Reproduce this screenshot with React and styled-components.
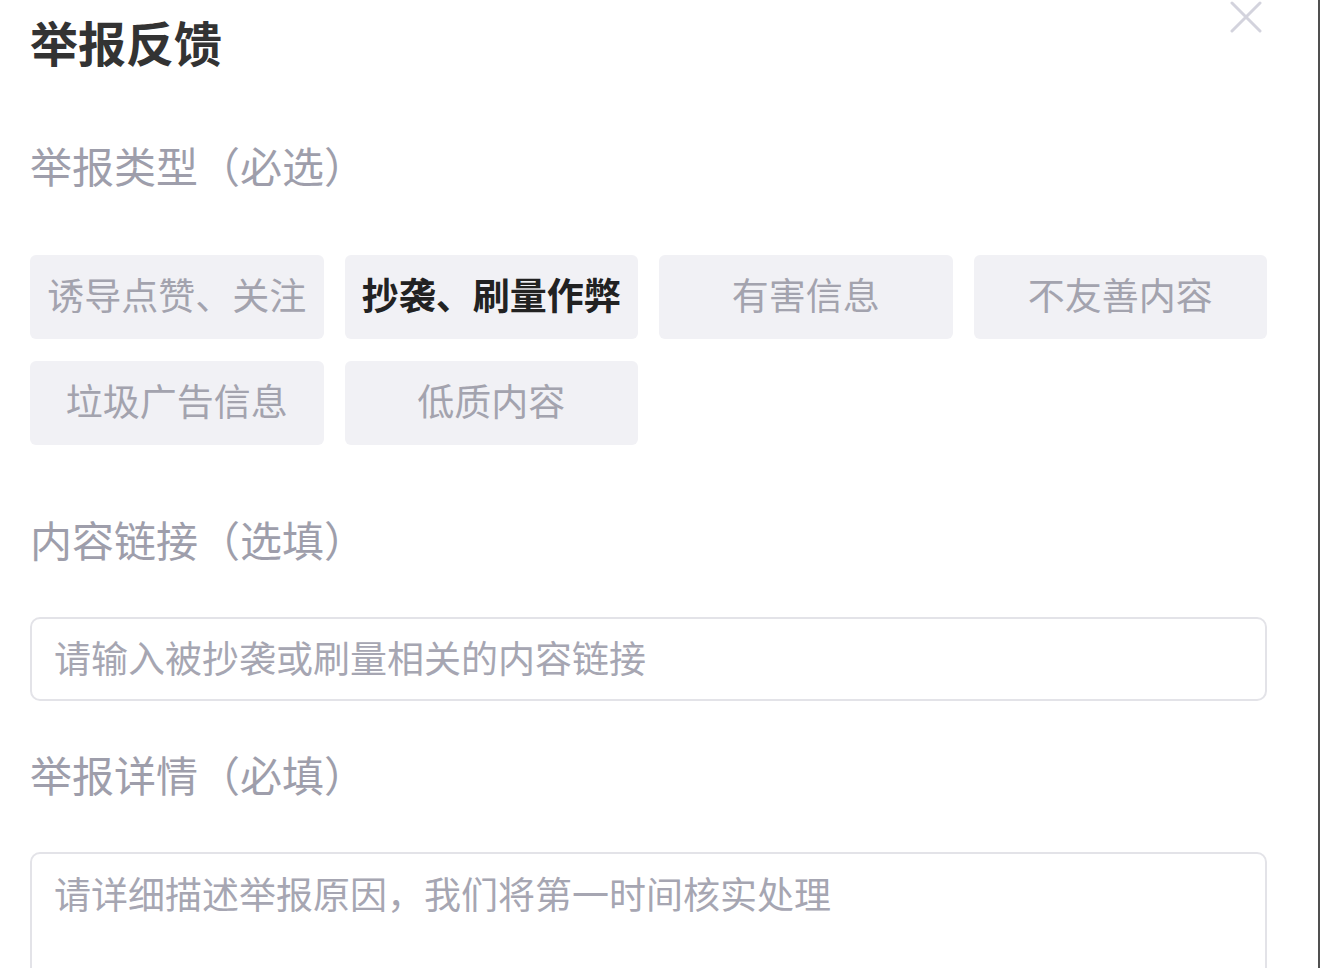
import React, { useState } from "react";
import styled, { createGlobalStyle } from "styled-components";

const GlobalStyle = createGlobalStyle`
  html, body {
    margin: 0;
    padding: 0;
    background: #fff;
  }
  body {
    font-family: "Noto Sans CJK SC", "Noto Sans", sans-serif;
  }
  * {
    box-sizing: border-box;
  }
`;

const types = [
  "诱导点赞、关注",
  "抄袭、刷量作弊",
  "有害信息",
  "不友善内容",
  "垃圾广告信息",
  "低质内容",
];

const CloseIcon = () => (
  <svg width="32" height="32" viewBox="0 0 32 32" fill="none">
    <path
      d="M2 2 L30 30 M30 2 L2 30"
      stroke="#d3d3dd"
      strokeWidth="3"
      strokeLinecap="round"
    />
  </svg>
);

const App = () => {
  const [active, setActive] = useState(1);

  return (
    <Wrapper>
      <GlobalStyle />
      <Header>
        <Title>举报反馈</Title>
        <CloseButton type="button" aria-label="关闭">
          <CloseIcon />
        </CloseButton>
      </Header>

      <Label $top={79} $bottom={69}>举报类型（必选）</Label>
      <ChipGrid>
        {types.map((t, i) => (
          <Chip key={t} $active={i === active} onClick={() => setActive(i)}>
            {t}
          </Chip>
        ))}
      </ChipGrid>

      <Label $top={73}>内容链接（选填）</Label>
      <Input placeholder="请输入被抄袭或刷量相关的内容链接" />

      <Label $top={52}>举报详情（必填）</Label>
      <TextArea placeholder="请详细描述举报原因，我们将第一时间核实处理" />
    </Wrapper>
  );
};

const Wrapper = styled.div`
  width: 1320px;
  height: 968px;
  overflow: hidden;
  padding: 0 51px 0 30px;
  border-right: 2px solid #505050;
`;

const Header = styled.div`
  display: flex;
  justify-content: space-between;
  align-items: flex-start;
`;

const Title = styled.h1`
  margin: 17px 0 0 0;
  font-size: 48px;
  line-height: 48px;
  font-weight: 700;
  color: #333;
`;

const CloseButton = styled.button`
  border: none;
  background: none;
  padding: 0;
  margin: 1px 5px 0 0;
  cursor: pointer;
  svg {
    display: block;
  }
`;

const Label = styled.div`
  font-size: 42px;
  line-height: 42px;
  color: #9e9eab;
  margin-top: ${(p) => p.$top}px;
  margin-bottom: ${(p) => p.$bottom ?? 57}px;
`;

const ChipGrid = styled.div`
  display: grid;
  grid-template-columns: repeat(4, 1fr);
  gap: 22px 21px;
`;

const Chip = styled.button`
  height: 84px;
  border: none;
  border-radius: 6px;
  background: #f1f1f5;
  font-family: inherit;
  font-size: 37px;
  color: ${(p) => (p.$active ? "#222" : "#a3a3ae")};
  font-weight: ${(p) => (p.$active ? 700 : 400)};
  cursor: pointer;
  padding: 0 0 6px 0;
`;

const fieldStyles = `
  display: block;
  width: 100%;
  border: 2px solid #e3e3e8;
  border-radius: 10px;
  font-family: inherit;
  font-size: 37px;
  color: #333;
  outline: none;
  background: #fff;
  &::placeholder {
    color: #a6a6b2;
  }
`;

const Input = styled.input`
  ${fieldStyles}
  height: 84px;
  padding: 0 22px 4px;
`;

const TextArea = styled.textarea`
  ${fieldStyles}
  height: 240px;
  padding: 12px 22px;
  resize: none;
`;

export default App;
